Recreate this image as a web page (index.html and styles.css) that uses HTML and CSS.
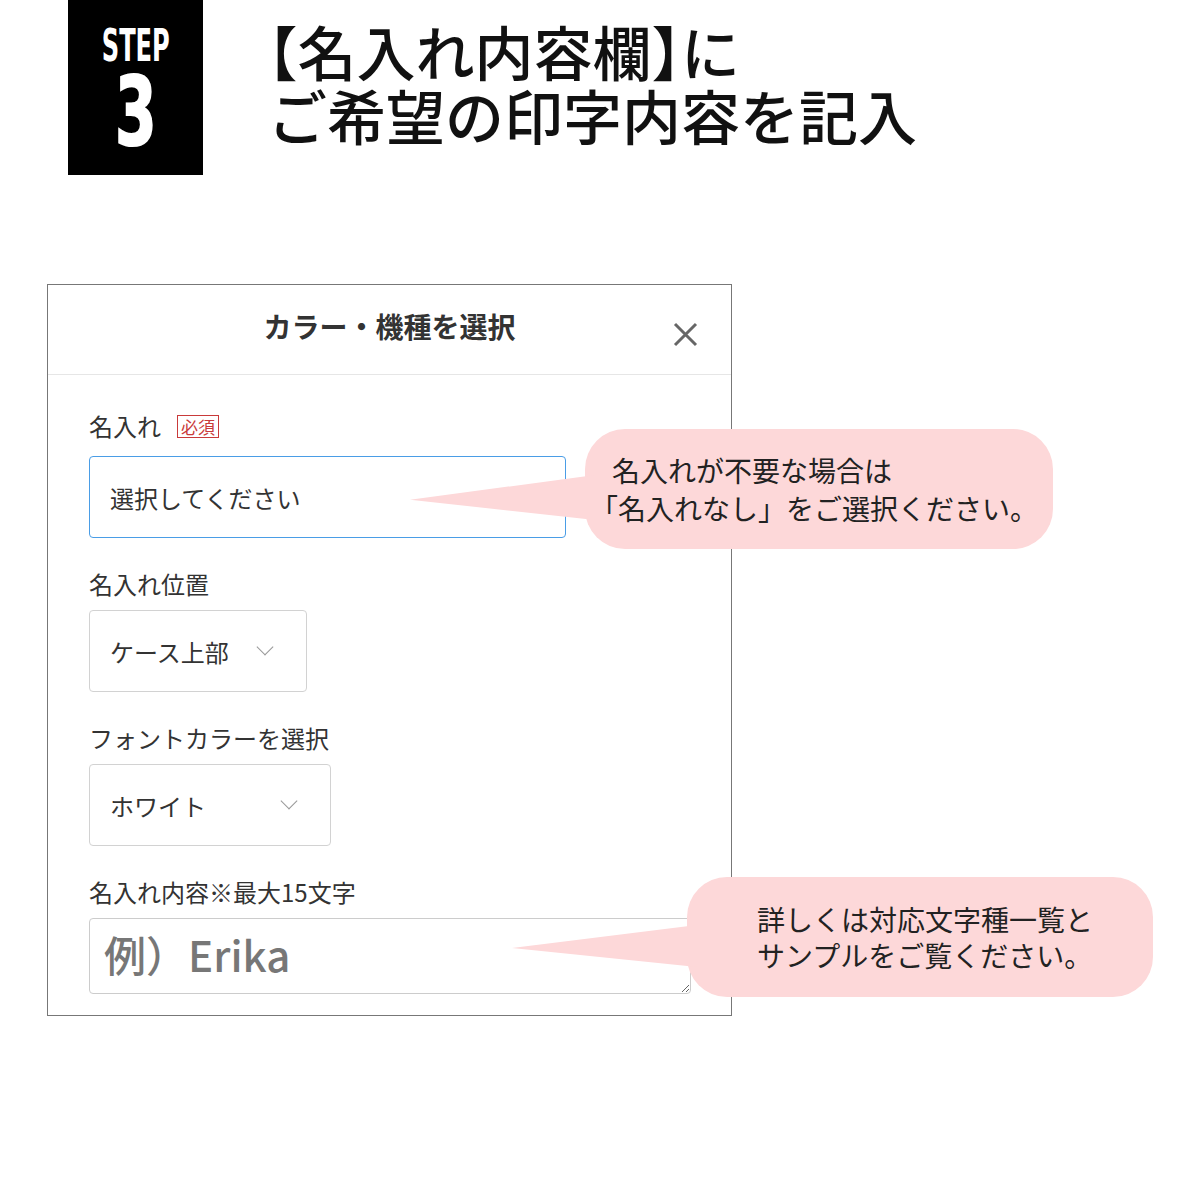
FILE: index.html
```html
<!DOCTYPE html>
<html lang="ja">
<head>
<meta charset="UTF-8" />
<meta name="viewport" content="width=device-width,initial-scale=1" />
<title>STEP 3 名入れ内容欄</title>
<link rel="stylesheet" href="styles.css">
</head>
<body>
<div class="stage">

  <!-- HEADER -->
  <div class="step-head">
    <div class="step-box">
      <span class="step-word">STEP</span>
      <span class="step-num">3</span>
    </div>
    <h1 class="title">
      <span class="t-line"><span class="br">【</span>名入れ内容欄<span class="br">】</span>に</span>
      <span class="t-line">ご希望の印字内容を記入</span>
    </h1>
  </div>

  <!-- MODAL -->
  <div class="panel">
    <div class="panel-head">
      <h2>カラー・機種を選択</h2>
      <span class="close">
        <svg width="25" height="25" viewBox="0 0 25 25"><path d="M2 2L23 23M23 2L2 23" stroke="#666" stroke-width="3" fill="none"/></svg>
      </span>
    </div>
    <div class="panel-body">
      <div class="field first">
        <div class="label">名入れ <span class="req">必須</span></div>
        <div class="select active">選択してください</div>
      </div>
      <div class="field">
        <div class="label">名入れ位置</div>
        <div class="select pos">ケース上部<span class="chev"></span></div>
      </div>
      <div class="field">
        <div class="label">フォントカラーを選択</div>
        <div class="select color">ホワイト<span class="chev"></span></div>
      </div>
      <div class="field">
        <div class="label">名入れ内容※最大15文字</div>
        <textarea class="text" placeholder="例）Erika"></textarea>
      </div>
    </div>
  </div>

  <!-- CALLOUTS -->
  <div class="bubble b1">
    <div class="b-text"><span class="l1">名入れが不要な場合は</span><br><span class="br">「</span>名入れなし」をご選択ください。</div>
  </div>
  <div class="bubble b2">
    <div class="b-text">詳しくは対応文字種一覧と<br>サンプルをご覧ください。</div>
  </div>

</div>
</body>
</html>
```

FILE: styles.css
```css
:root{
  --pink:#fdd8d9; --ink:#222; --line:#d2d2d2; --blue:#4a9de6;
}
*{box-sizing:border-box;margin:0;padding:0}

body{
  background:#fff;
  font-family:"Noto Sans CJK JP","Noto Sans",sans-serif;
  color:#333;
}
.stage{position:relative;width:1200px;height:1200px;overflow:hidden}

/* header */
.step-head{display:flex;padding-left:68px}
.step-box{
  width:135px;height:175px;background:#000;color:#fff;
  display:flex;flex-direction:column;align-items:center;
  font-family:"Liberation Sans Narrow","DejaVu Sans Condensed","Liberation Sans",sans-serif;
  font-weight:700;
}
.step-word{display:block;font-size:44px;line-height:44px;margin-top:24px;transform:scale(.61,1.02)}
.step-num{
  display:block;font-size:95px;line-height:95px;margin-top:-3px;
  transform:scaleX(.7);-webkit-text-stroke:2px #fff;
}
.title{
  margin-left:65px;padding-top:19px;
  font-size:59px;font-weight:500;color:#111;
}
.t-line{display:block;height:64px;line-height:64px}
.br{font-feature-settings:"halt"}

/* modal */
.panel{
  margin:109px 0 0 47px;width:685px;height:732px;
  border:1px solid #777;background:#fff;
}
.panel-head{
  position:relative;height:90px;border-bottom:1px solid #e6e6e6;
  display:flex;justify-content:center;align-items:center;padding-bottom:8px;
}
.panel-head h2{font-size:28px;font-weight:700;color:#333}
.close{position:absolute;left:625px;top:37px;width:25px;height:25px}
.close svg{display:block}

.panel-body{padding:34px 41px 0}
.field{margin-top:29px}
.field.first{margin-top:0}
.label{font-size:24px;line-height:34px;margin-bottom:9px;display:flex;align-items:center;gap:16px}
.field.first .label{margin-bottom:13px}
.req{
  font-size:17px;line-height:21px;color:#c93a3a;border:1px solid #c93a3a;
  padding:0 3px;
}
.select{
  height:82px;border:1px solid var(--line);border-radius:4px;
  display:flex;align-items:center;justify-content:space-between;
  padding:0 32px 0 20px;font-size:24px;color:#333;
}
.select.active{width:477px;border-color:var(--blue)}
.select.pos{width:218px}
.select.color{width:242px}
.chev{
  width:12px;height:12px;border-right:1.5px solid #999;border-bottom:1.5px solid #999;
  transform:translateY(-4px) rotate(45deg);margin-right:3px;
}
.text{
  display:block;width:602px;height:76px;
  border:1px solid #ccc;border-radius:4px;
  padding:8px 14px;font-family:inherit;font-size:42px;line-height:54px;
  color:#333;overflow:hidden;
}
.text::placeholder{color:#777;font-weight:500}

/* callouts */
.bubble{
  position:absolute;width:468px;height:120px;border-radius:40px;
  background:var(--pink);display:flex;justify-content:center;align-items:center;
  font-size:28px;color:var(--ink);
}
.bubble::before{
  content:"";position:absolute;left:-175px;top:46px;width:185px;height:45px;
  background:var(--pink);clip-path:polygon(0 55%,100% 0,100% 100%);
}
.b1{left:585px;top:429px}
.b1 .b-text{line-height:38px;margin-left:4px}
.b1 .l1{margin-left:8px}
.b2{left:687px;top:877px;width:466px}
.b2::before{top:48px;height:42px;clip-path:polygon(0 55%,100% 0,100% 100%)}
.b2 .b-text{line-height:36px;margin-left:10px}
```
